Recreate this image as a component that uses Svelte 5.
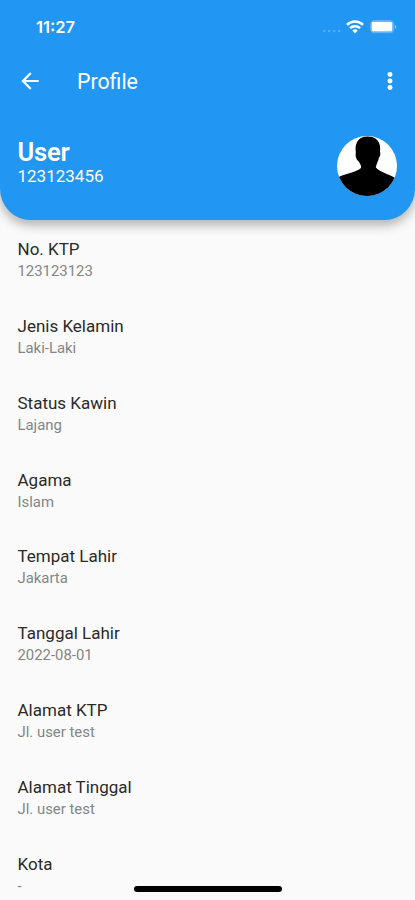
<script>
    let user = { name: 'User', number: '123123456' };

    let details = [
        { label: 'No. KTP', value: '123123123' },
        { label: 'Jenis Kelamin', value: 'Laki-Laki' },
        { label: 'Status Kawin', value: 'Lajang' },
        { label: 'Agama', value: 'Islam' },
        { label: 'Tempat Lahir', value: 'Jakarta' },
        { label: 'Tanggal Lahir', value: '2022-08-01' },
        { label: 'Alamat KTP', value: 'Jl. user test' },
        { label: 'Alamat Tinggal', value: 'Jl. user test' },
        { label: 'Kota', value: '-' },
    ];
</script>

<div class="screen">
    <header>
        <div class="status-bar">
            <span class="time">11:27</span>
            <div class="status-icons">
                <svg width="20" height="4" viewBox="0 0 20 4" fill="#fff" opacity="0.25">
                    <circle cx="2.2" cy="2" r="1.2" />
                    <circle cx="7.2" cy="2" r="1.2" />
                    <circle cx="12.2" cy="2" r="1.2" />
                    <circle cx="17.2" cy="2" r="1.2" />
                </svg>
                <svg class="wifi" width="18" height="14" viewBox="0 0 18 14" fill="none" stroke="#fff" stroke-width="2.5">
                    <path d="M1 4.9a11.4 11.4 0 0 1 16 0" />
                    <path d="M4 8.2a7.1 7.1 0 0 1 10 0" />
                    <path d="M9 13.4L6.3 10.6a3.8 3.8 0 0 1 5.4 0z" fill="#fff" stroke="none" />
                </svg>
                <svg class="battery" width="27" height="14" viewBox="0 0 27 14">
                    <rect x="0.7" y="0.7" width="23" height="12" rx="3.4" fill="none" stroke="#fff" stroke-opacity="0.35" />
                    <rect x="1.6" y="1.8" width="20.8" height="9.8" rx="1.6" fill="#fff" />
                    <path d="M25 4.9v3.8a2 2 0 0 0 0-3.8z" fill="#fff" fill-opacity="0.55" />
                </svg>
            </div>
        </div>

        <div class="app-bar">
            <button class="back" aria-label="Back">
                <svg width="26" height="26" viewBox="0 0 24 24" fill="#fff">
                    <path d="M20 11H7.83l5.59-5.59L12 4l-8 8 8 8 1.41-1.41L7.83 13H20v-2z" />
                </svg>
            </button>
            <h1>Profile</h1>
            <button class="more" aria-label="More">
                <svg width="26" height="26" viewBox="0 0 24 24" fill="#fff">
                    <circle cx="12" cy="6" r="2.3" />
                    <circle cx="12" cy="12" r="2.3" />
                    <circle cx="12" cy="18" r="2.3" />
                </svg>
            </button>
        </div>

        <div class="user">
            <div class="user-text">
                <h2>{user.name}</h2>
                <p>{user.number}</p>
            </div>
            <svg class="avatar" width="60" height="60" viewBox="0 0 60 60">
                <path
                    d="M0 42C7 37.5 18 37 24 32C24.4 29.5 23 27.5 21.6 25.6C19 23.5 18.2 20 18.8 16C17.6 7 21.5 0.8 30 0.6C39 0.2 44.4 6 43 15.5C43.8 18 43.2 20.5 42 21.4C41.3 25.6 39.2 28 38.8 31.5C43.5 36.5 52 38 60 43V60H0z"
                    fill="#000"
                />
            </svg>
        </div>
    </header>

    <main>
        {#each details as detail}
            <div class="detail">
                <h3>{detail.label}</h3>
                <p>{detail.value}</p>
            </div>
        {/each}
    </main>

    <div class="home-indicator"></div>
</div>

<style>
    :global(body) {
        margin: 0;
        background-color: #fafafa;
    }

    .screen {
        position: relative;
        height: 900px;
        overflow: hidden;
        background-color: #fafafa;
        font-family: Roboto, sans-serif;
    }

    h1, h2, h3, p {
        margin: 0;
        font-weight: 400;
    }

    svg {
        display: block;
    }

    header {
        box-sizing: border-box;
        height: 220.4px;
        background-color: #2196f3;
        border-radius: 0 0 31px 31px;
        box-shadow: 0 5px 11px rgba(0, 0, 0, 0.3);
        color: white;
    }

    .status-bar {
        display: flex;
        justify-content: space-between;
        align-items: center;
        height: 51px;
        padding: 2px 18px 0 36px;
        box-sizing: border-box;
    }

    .time {
        font-family: Inter, sans-serif;
        font-size: 16.5px;
        font-weight: 600;
    }

    .status-icons {
        display: flex;
        align-items: center;
    }

    .status-icons svg:first-child {
        margin: 8px 4px 0 0;
    }

    .battery {
        margin-left: 6px;
    }

    .app-bar {
        display: flex;
        align-items: center;
        height: 60px;
        padding: 0 12px 0 17px;
    }

    button {
        padding: 0;
        border: none;
        background: none;
    }

    h1 {
        flex: 1;
        margin-left: 34px;
        padding-top: 1px;
        font-size: 21.3px;
        line-height: 26px;
    }

    .user {
        display: flex;
        justify-content: space-between;
        align-items: center;
        height: 60px;
        margin-top: 24.5px;
        padding: 0 18.5px 0 17.5px;
    }

    .user-text {
        padding-bottom: 5px;
    }

    h2 {
        font-size: 25.5px;
        font-weight: 600;
        line-height: 26px;
        letter-spacing: -0.2px;
    }

    .user p {
        font-size: 17px;
        line-height: 23px;
    }

    .avatar {
        border-radius: 50%;
        background-color: white;
    }

    main {
        padding: 17.8px 17.5px 0;
    }

    .detail {
        height: 76.8px;
    }

    h3 {
        color: #2a2a2a;
        font-size: 17px;
        line-height: 22px;
    }

    .detail p {
        color: #858585;
        font-size: 14.9px;
        line-height: 22px;
    }

    .home-indicator {
        position: absolute;
        bottom: 8px;
        left: 134px;
        width: 148px;
        height: 6px;
        border-radius: 3px;
        background-color: black;
    }
</style>
